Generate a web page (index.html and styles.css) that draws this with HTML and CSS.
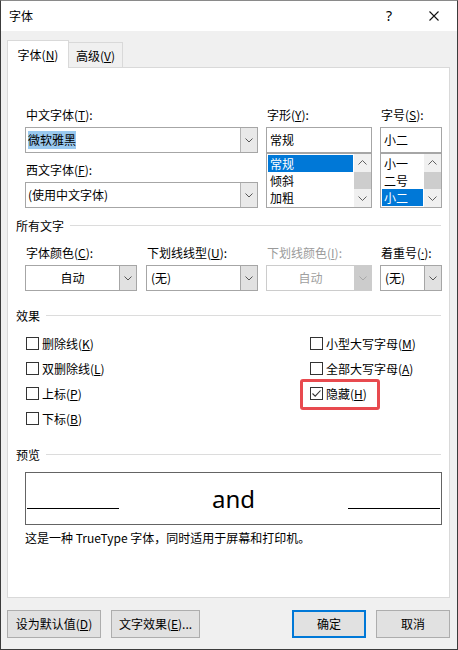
FILE: index.html
```html
<!DOCTYPE html>
<html lang="zh-CN">
<head>
<meta charset="utf-8">
<title>字体</title>
<link rel="stylesheet" href="styles.css">
</head>
<body>
<div class="window">
  <div class="titlebar">
    <span class="title">字体</span>
    <span class="help">?</span>
    <svg class="close" width="10" height="10" viewBox="0 0 10 10"><path d="M0.5 0.5 L9.5 9.5 M9.5 0.5 L0.5 9.5" stroke="#111" stroke-width="1.1" fill="none"/></svg>
  </div>
  <div class="main">
    <div class="tabs">
      <div class="tab active">字体(<u>N</u>)</div>
      <div class="tab inactive">高级(<u>V</u>)</div>
    </div>
    <div class="panel">
      <div class="font-grid indent">
        <div class="col">
          <span class="label">中文字体(<u>T</u>):</span>
          <div class="combo edit"><span class="val"><span class="hl">微软雅黑</span></span><span class="drop"><svg width="8" height="5" viewBox="0 0 8 5"><polyline points="0.5,0.5 4,4 7.5,0.5" fill="none" stroke="#555"/></svg></span></div>
          <span class="label gap">西文字体(<u>F</u>):</span>
          <div class="combo edit"><span class="val">(使用中文字体)</span><span class="drop"><svg width="8" height="5" viewBox="0 0 8 5"><polyline points="0.5,0.5 4,4 7.5,0.5" fill="none" stroke="#555"/></svg></span></div>
        </div>
        <div class="col">
          <span class="label">字形(<u>Y</u>):</span>
          <div class="textbox">常规</div>
          <div class="listbox">
            <div class="items">
              <div class="item selected">常规</div>
              <div class="item">倾斜</div>
              <div class="item">加粗</div>
            </div>
            <div class="scroll">
              <span class="arrow"><svg width="9" height="5" viewBox="0 0 9 5"><polyline points="0.5,4.5 4.5,0.5 8.5,4.5" fill="none" stroke="#606060"/></svg></span>
              <span class="thumb"></span>
              <span class="arrow down"><svg width="9" height="5" viewBox="0 0 9 5"><polyline points="0.5,0.5 4.5,4.5 8.5,0.5" fill="none" stroke="#606060"/></svg></span>
            </div>
          </div>
        </div>
        <div class="col">
          <span class="label">字号(<u>S</u>):</span>
          <div class="textbox">小二</div>
          <div class="listbox">
            <div class="items">
              <div class="item">小一</div>
              <div class="item">二号</div>
              <div class="item selected">小二</div>
            </div>
            <div class="scroll">
              <span class="arrow"><svg width="9" height="5" viewBox="0 0 9 5"><polyline points="0.5,4.5 4.5,0.5 8.5,4.5" fill="none" stroke="#606060"/></svg></span>
              <span class="thumb"></span>
              <span class="arrow down"><svg width="9" height="5" viewBox="0 0 9 5"><polyline points="0.5,0.5 4.5,4.5 8.5,0.5" fill="none" stroke="#606060"/></svg></span>
            </div>
          </div>
        </div>
      </div>

      <div class="group g-all"><span>所有文字</span><span class="rule"></span></div>

      <div class="color-grid indent">
        <div class="col">
          <span class="label">字体颜色(<u>C</u>):</span>
          <div class="combo list w112"><span class="val center">自动</span><span class="drop"><svg width="8" height="5" viewBox="0 0 8 5"><polyline points="0.5,0.5 4,4 7.5,0.5" fill="none" stroke="#555"/></svg></span></div>
        </div>
        <div class="col">
          <span class="label">下划线线型(<u>U</u>):</span>
          <div class="combo list"><span class="val pad">(无)</span><span class="drop"><svg width="8" height="5" viewBox="0 0 8 5"><polyline points="0.5,0.5 4,4 7.5,0.5" fill="none" stroke="#555"/></svg></span></div>
        </div>
        <div class="col">
          <span class="label disabled">下划线颜色(<u>I</u>):</span>
          <div class="combo list off"><span class="val center">自动</span><span class="drop"><svg width="8" height="5" viewBox="0 0 8 5"><polyline points="0.5,0.5 4,4 7.5,0.5" fill="none" stroke="#a8a8a8"/></svg></span></div>
        </div>
        <div class="col">
          <span class="label">着重号(<u class="dot">·</u>):</span>
          <div class="combo list"><span class="val pad">(无)</span><span class="drop"><svg width="8" height="5" viewBox="0 0 8 5"><polyline points="0.5,0.5 4,4 7.5,0.5" fill="none" stroke="#555"/></svg></span></div>
        </div>
      </div>

      <div class="group g-fx"><span>效果</span><span class="rule"></span></div>

      <div class="effects">
        <div class="check"><span class="box"></span><span>删除线(<u>K</u>)</span></div>
        <div class="check"><span class="box"></span><span>小型大写字母(<u>M</u>)</span></div>
        <div class="check"><span class="box"></span><span>双删除线(<u>L</u>)</span></div>
        <div class="check"><span class="box"></span><span>全部大写字母(<u>A</u>)</span></div>
        <div class="check"><span class="box"></span><span>上标(<u>P</u>)</span></div>
        <div class="check marked"><span class="box"><svg width="11" height="11" viewBox="0 0 11 11"><polyline points="1.5,5.5 4.2,8.2 9.5,2.5" fill="none" stroke="#333" stroke-width="1.1"/></svg></span><span>隐藏(<u>H</u>)</span></div>
        <div class="check"><span class="box"></span><span>下标(<u>B</u>)</span></div>
      </div>

      <div class="group g-pv"><span>预览</span><span class="rule"></span></div>

      <div class="preview indent">
        <span class="line"></span>
        <span class="sample">and</span>
        <span class="line"></span>
      </div>
      <p class="desc indent">这是一种 TrueType 字体，同时适用于屏幕和打印机。</p>
    </div>

    <div class="buttons">
      <div class="btn b-default">设为默认值(<u>D</u>)</div>
      <div class="btn b-effects">文字效果(<u>E</u>)...</div>
      <div class="btn b-ok">确定</div>
      <div class="btn b-cancel">取消</div>
    </div>
  </div>
</div>
</body>
</html>
```
FILE: styles.css
```css
html, body {
  margin: 0;
  padding: 0;
  background: #f0f0f0;
}
body {
  font-family: "Noto Sans CJK SC", "Noto Sans", sans-serif;
  font-size: 12px;
  color: #000;
}
u {
  text-underline-offset: 1px;
}
u.dot {
  font-family: "Noto Sans", sans-serif;
}
.window {
  width: 458px;
  height: 650px;
  box-sizing: border-box;
  border: 1px solid #3c3c3c;
  border-top-color: #8a8a8a;
  display: flex;
  flex-direction: column;
  background: #f0f0f0;
}
.titlebar {
  height: 30px;
  background: #fff;
  display: flex;
  align-items: center;
  padding-left: 8px;
  padding-bottom: 1px;
  box-sizing: border-box;
  flex: none;
}
.title {
  line-height: 16px;
}
.help {
  margin-left: auto;
  width: 10px;
  text-align: center;
  font-family: "Noto Sans", sans-serif;
  font-size: 14px;
  line-height: 16px;
}
.close {
  margin-left: 35px;
  margin-right: 18px;
  display: block;
}
.main {
  flex: 1;
  padding: 9px 7px 0 6px;
  display: flex;
  flex-direction: column;
}
.tabs {
  display: flex;
  align-items: flex-end;
  height: 28px;
  margin-bottom: -1px;
  position: relative;
  z-index: 1;
}
.tab {
  box-sizing: border-box;
  border: 1px solid #d9d9d9;
  border-bottom: none;
  display: flex;
  align-items: center;
  justify-content: center;
  line-height: 16px;
}
.tab.active {
  width: 62px;
  height: 28px;
  background: #fff;
  padding-top: 1px;
}
.tab.inactive {
  width: 54px;
  height: 25px;
  margin-bottom: 1px;
  border-left: none;
  background: #f0f0f0;
  padding-top: 2px;
}
.panel {
  box-sizing: border-box;
  height: 531px;
  background: #fff;
  border: 1px solid #d9d9d9;
  padding: 39px 7px 0 8px;
}
.indent {
  margin-left: 9px;
}
.label {
  display: block;
  height: 16px;
  line-height: 16px;
  padding-left: 1px;
  margin-bottom: 4px;
  white-space: nowrap;
}
.label.gap {
  margin-top: 9px;
}
.label.disabled {
  color: #9a9a9a;
}
.font-grid {
  display: grid;
  grid-template-columns: 233px 106px 62px;
  column-gap: 8px;
}
.col {
  display: flex;
  flex-direction: column;
}
.combo {
  box-sizing: border-box;
  height: 26px;
  border: 1px solid #a6a6a6;
  display: flex;
  background: #fff;
}
.combo .val {
  flex: 1;
  display: flex;
  align-items: center;
  padding-left: 2px;
  line-height: 16px;
  white-space: nowrap;
}
.combo .val.center {
  justify-content: center;
  padding-left: 0;
}
.combo .val.pad {
  padding-left: 4px;
}
.hl {
  background: #99c9ef;
  padding: 1px 0;
}
.combo .drop {
  width: 16px;
  border-left: 1px solid #b4b4b4;
  display: flex;
  align-items: center;
  justify-content: center;
  background: #e9e9e9;
}
.combo.list .drop {
  background: #e1e1e1;
  border-left-color: #a6a6a6;
}
.combo.w112 {
  width: 112px;
}
.combo.off {
  border-color: #cccccc;
  color: #a0a0a0;
}
.combo.off .drop {
  background: #cccccc;
  border-left-color: #cccccc;
}
.textbox {
  box-sizing: border-box;
  height: 26px;
  border: 1px solid #a6a6a6;
  display: flex;
  align-items: center;
  padding-left: 3px;
  line-height: 16px;
}
.listbox {
  box-sizing: border-box;
  height: 55px;
  border: 1px solid #a6a6a6;
  display: flex;
}
.items {
  flex: 1;
  padding: 1px;
  min-width: 0;
}
.item {
  height: 17px;
  line-height: 17px;
  padding-left: 2px;
}
.item.selected {
  background: #0078d7;
  color: #fff;
}
.scroll {
  width: 17px;
  flex: none;
  background: #f0f0f0;
  display: flex;
  flex-direction: column;
}
.arrow {
  height: 17px;
  display: flex;
  align-items: center;
  justify-content: center;
}
.arrow.down {
  margin-top: auto;
}
.thumb {
  height: 17px;
  margin-top: 1px;
  background: #cdcdcd;
}
.group {
  display: flex;
  align-items: center;
  gap: 6px;
  height: 16px;
  line-height: 16px;
}
.group .rule {
  flex: 1;
  height: 1px;
  background: #dcdcdc;
  margin-right: 1px;
  margin-top: -1px;
}
.g-all {
  margin-top: 10px;
}
.color-grid {
  display: grid;
  grid-template-columns: 113px 112px 106px 62px;
  column-gap: 8px;
  margin-top: 11px;
}
.g-fx {
  margin-top: 17px;
}
.effects {
  display: grid;
  grid-template-columns: 284px 1fr;
  margin-left: 10px;
  margin-top: 7px;
}
.check {
  display: flex;
  align-items: center;
  gap: 3px;
  height: 25px;
  line-height: 16px;
  position: relative;
}
.box {
  box-sizing: border-box;
  width: 13px;
  height: 13px;
  border: 1px solid #333;
  background: #fff;
  display: flex;
  align-items: center;
  justify-content: center;
  flex: none;
}
.check.marked::after {
  content: "";
  position: absolute;
  left: -10px;
  top: -2px;
  width: 80px;
  height: 31px;
  box-sizing: border-box;
  border: 3px solid #e84a4f;
  border-radius: 3px;
}
.g-pv {
  margin-top: 16px;
}
.preview {
  box-sizing: border-box;
  height: 53px;
  margin-top: 9px;
  border: 1px solid #646464;
  display: grid;
  grid-template-columns: 92px 1fr 92px;
  align-items: end;
  padding: 0 1px 15px;
}
.line {
  height: 1px;
  background: #000;
}
.sample {
  font-family: "Noto Sans", sans-serif;
  font-size: 24px;
  line-height: 24px;
  text-align: center;
  margin-bottom: -2px;
}
.desc {
  margin-top: 5px;
  margin-bottom: 0;
  line-height: 16px;
}
.buttons {
  display: flex;
  gap: 10px;
  margin-top: 12px;
}
.btn {
  box-sizing: border-box;
  height: 28px;
  border: 1px solid #adadad;
  background: #e1e1e1;
  display: flex;
  align-items: center;
  justify-content: center;
  line-height: 16px;
  white-space: nowrap;
}
.b-default {
  width: 94px;
}
.b-effects {
  width: 89px;
}
.b-ok {
  width: 74px;
  margin-left: auto;
  border: 2px solid #0078d7;
}
.b-cancel {
  width: 74px;
}
```
